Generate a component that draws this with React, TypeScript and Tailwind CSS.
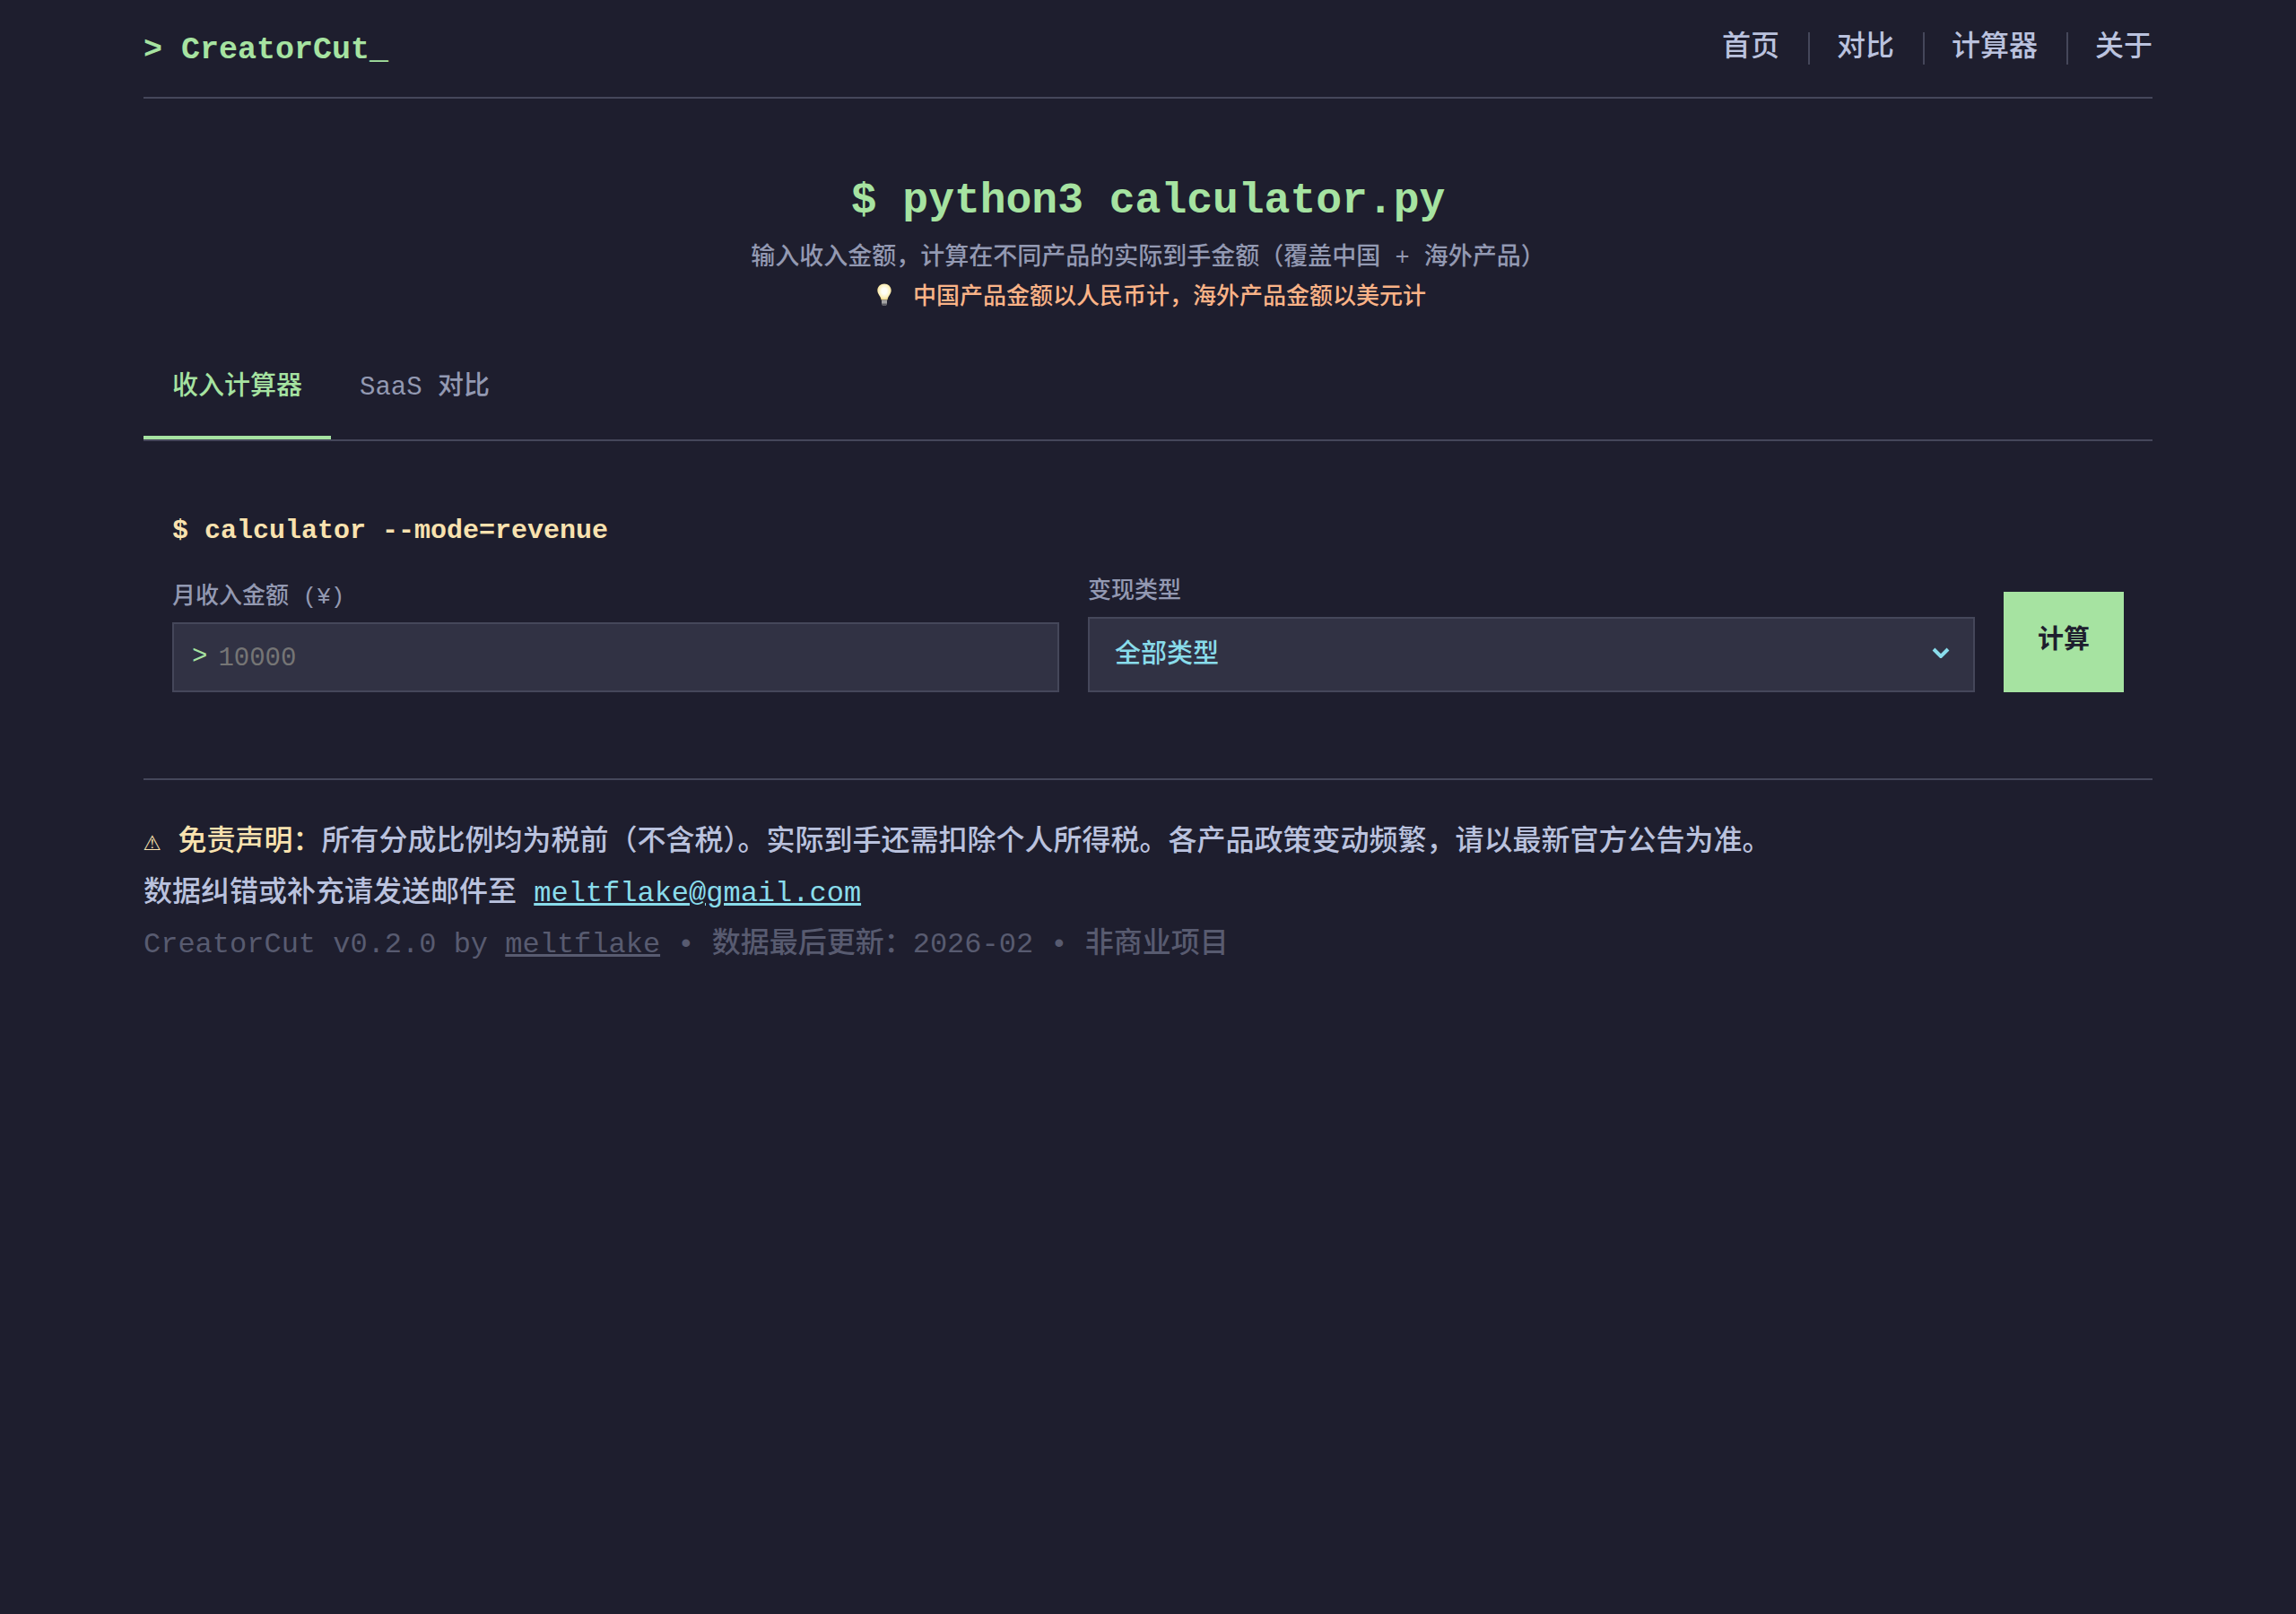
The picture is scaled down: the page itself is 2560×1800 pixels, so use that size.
import { useState } from "react";

const navItems = [
  { label: "首页", href: "#home" },
  { label: "对比", href: "#compare" },
  { label: "计算器", href: "#calculator" },
  { label: "关于", href: "#about" },
];

const tabs = [
  { id: "revenue", label: "收入计算器" },
  { id: "saas", label: "SaaS 对比" },
];

function BulbIcon() {
  return (
    <svg className="mr-4 inline-block h-[26px] w-8 align-[-3px]" viewBox="0 0 32 26" aria-hidden="true">
      <defs>
        <radialGradient id="bulb" cx="0.5" cy="0.45" r="0.6">
          <stop offset="0.3" stopColor="#fffef6" />
          <stop offset="0.7" stopColor="#fbeeb8" />
          <stop offset="1" stopColor="#e8c766" />
        </radialGradient>
      </defs>
      <path
        d="M16 0.500c-4.300 0-7.700 3.200-7.700 7.400 0 3.200 1.900 4.700 3.100 7 .6 1.200.9 2.500 1.100 3.700h7c.2-1.200.5-2.500 1.100-3.700 1.200-2.300 3.100-3.800 3.100-7C23.700 3.700 20.300.5 16 .5z"
        fill="url(#bulb)"
      />
      <path d="M13 18.500h6v4c0 1.500-1.200 2.500-3 2.500s-3-1-3-2.500z" fill="#a3a2a3" />
      <path d="M13 22.500h6v.5c0 1.300-1.200 2-3 2s-3-.7-3-2z" fill="#5a5a62" />
    </svg>
  );
}

function Header() {
  return (
    <header className="flex h-[110px] items-start justify-between border-b-2 border-[#45475a] pt-9">
      <a href="#home" className="text-[35px] leading-10 font-bold text-[#a6e3a1]">
        &gt; CreatorCut_
      </a>
      <nav>
        <ul className="flex text-[32px] leading-9 text-[#bac2de]">
          {navItems.map((item) => (
            <li
              key={item.href}
              className="mr-8 border-l-2 border-[#45475a] pl-[30px] first:border-l-0 first:pl-0 last:mr-0"
            >
              <a href={item.href} className="block">
                {item.label}
              </a>
            </li>
          ))}
        </ul>
      </nav>
    </header>
  );
}

function Hero() {
  return (
    <section className="pt-[82px] text-center">
      <h1 className="text-[48px] leading-16 font-bold text-[#a6e3a1]">$ python3 calculator.py</h1>
      <p className="mt-[10px] text-[27px] leading-11 text-[#9399b2]">
        输入收入金额，计算在不同产品的实际到手金额（覆盖中国 + 海外产品）
      </p>
      <p className="text-[26px] leading-11 text-[#fab387]">
        <BulbIcon />
        中国产品金额以人民币计，海外产品金额以美元计
      </p>
    </section>
  );
}

function RevenueForm() {
  const [amount, setAmount] = useState("");

  return (
    <section className="px-8 pt-20 pb-24">
      <h2 className="text-[30px] leading-10 font-bold text-[#f9e2af]">$ calculator --mode=revenue</h2>
      <form
        className="mt-[30px] grid grid-cols-[1fr_1fr_auto] items-end gap-8"
        onSubmit={(e) => e.preventDefault()}
      >
        <div>
          <label htmlFor="amount" className="mb-[10px] block text-[26px] leading-9 text-[#9399b2]">
            月收入金额 (¥)
          </label>
          <div className="flex h-[78px] items-center border-2 border-[#45475a] bg-[#313244] pl-5 text-[29px]">
            <span className="text-[#a6e3a1]">&gt;</span>
            <input
              id="amount"
              type="text"
              inputMode="numeric"
              placeholder="10000"
              value={amount}
              onChange={(e) => setAmount(e.target.value)}
              className="ml-3 w-full bg-transparent pt-1 text-[#cdd6f4] outline-none placeholder:text-[#757575]"
            />
          </div>
        </div>
        <div>
          <label htmlFor="type" className="mb-[10px] block text-[26px] leading-9 text-[#9399b2]">
            变现类型
          </label>
          <div className="relative">
            <select
              id="type"
              className="block h-[84px] w-full appearance-none border-2 border-[#45475a] bg-[#313244] pt-1 pr-16 pl-7 text-[29px] font-medium text-[#89dceb] outline-none"
            >
              <option>全部类型</option>
            </select>
            <svg
              className="pointer-events-none absolute top-[34px] right-7 h-3 w-5"
              viewBox="0 0 20 12"
              fill="none"
              stroke="#89dceb"
              strokeWidth="4"
            >
              <path d="M2 2l8 8 8-8" />
            </svg>
          </div>
        </div>
        <button type="submit" className="h-28 bg-[#a6e3a1] px-[38px] text-[29px] font-bold text-[#1e1e2e]">
          计算
        </button>
      </form>
    </section>
  );
}

function Footer() {
  return (
    <footer className="border-t-2 border-[#45475a] pt-[39px] text-[32px] leading-[57px] text-[#bac2de]">
      <p>
        <span className="text-[#f9e2af]">
          <span className="font-['DejaVu_Sans_Mono']">⚠</span> 免责声明：
        </span>
        所有分成比例均为税前（不含税）。实际到手还需扣除个人所得税。各产品政策变动频繁，请以最新官方公告为准。
      </p>
      <p>
        数据纠错或补充请发送邮件至{" "}
        <a href="mailto:meltflake@gmail.com" className="text-[#89dceb] underline">
          meltflake@gmail.com
        </a>
      </p>
      <p className="text-[#585b70]">
        CreatorCut v0.2.0 by{" "}
        <a href="#meltflake" className="underline">
          meltflake
        </a>{" "}
        • 数据最后更新：2026-02 • 非商业项目
      </p>
    </footer>
  );
}

export default function App() {
  const [active, setActive] = useState("revenue");

  return (
    <div className="min-h-screen bg-[#1e1e2e] px-40 font-['Liberation_Mono','Noto_Sans_CJK_SC',monospace] font-medium">
      <Header />
      <main>
        <Hero />
        <div role="tablist" className="mt-9 flex border-b-2 border-[#45475a]">
          {tabs.map((tab) => (
            <button
              key={tab.id}
              type="button"
              role="tab"
              aria-selected={active === tab.id}
              onClick={() => setActive(tab.id)}
              className={`h-[100px] border-b-4 px-8 pb-2.5 text-[29px] ${
                active === tab.id ? "border-[#a6e3a1] text-[#a6e3a1]" : "border-transparent text-[#9399b2]"
              }`}
            >
              {tab.label}
            </button>
          ))}
        </div>
        <RevenueForm />
      </main>
      <Footer />
    </div>
  );
}
